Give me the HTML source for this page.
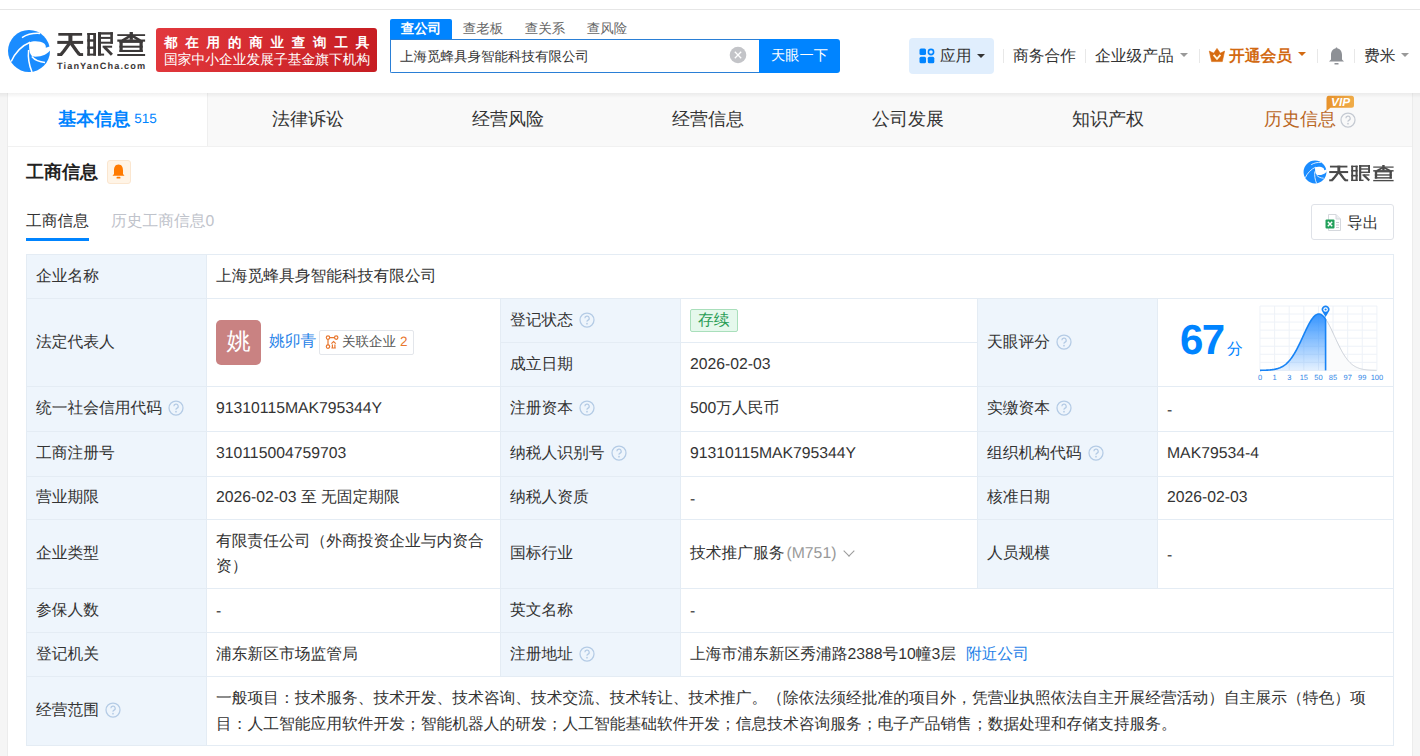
<!DOCTYPE html>
<html><head><meta charset="utf-8">
<style>
*{box-sizing:border-box;margin:0;padding:0}
html,body{width:1420px;height:756px;overflow:hidden;background:#f5f5f5}
body{font-family:"Liberation Sans",sans-serif;color:#333;position:relative;text-rendering:geometricPrecision}
.a{position:absolute;white-space:nowrap}
.hdr{position:absolute;left:0;top:0;width:1420px;height:93px;background:#fff}
.sh{position:absolute;left:0;top:93px;width:1420px;height:5px;z-index:5;background:linear-gradient(rgba(0,0,0,.055),rgba(0,0,0,0))}
.card{position:absolute;left:7px;top:93px;width:1406px;height:700px;background:#fff;border-left:1px solid #ececec;border-right:1px solid #ececec}
.tabs{position:absolute;left:8px;top:93px;width:1404px;height:54px;background:#f9f9f9;border-bottom:1px solid #f1f1f1;display:flex}
.tab{width:200px;flex:none;position:relative;font-size:18px;line-height:20px;color:#333;display:flex;align-items:center;justify-content:center;padding-bottom:2px}
.tab.on{background:#fff;border-right:1px solid #efefef;color:#0084ff;font-weight:bold}
.sep{position:absolute;width:1px;background:#e8e8e8}
.nav{font-size:15.75px;line-height:20px;color:#333;margin-top:1.5px}
.caret{position:absolute;width:0;height:0;border-left:4px solid transparent;border-right:4px solid transparent;border-top:4px solid #999}
.q{position:absolute;width:15px;height:15px;border:1px solid #b8cde4;border-radius:50%;font-size:11px;line-height:13px;text-align:center;color:#b8cde4;font-family:"Liberation Sans",sans-serif}
/* table */
.c{position:absolute;background:#fff;border-right:1px solid #e4ecf4;border-bottom:1px solid #e4ecf4;font-size:15.75px;line-height:20px;color:#333;display:flex;align-items:center;padding-left:9px;white-space:nowrap}
.l{background:#eef5fc}
.qs{margin-left:6px;position:relative;top:-1px;flex:none}
.qi{display:inline-block;width:15px;height:15px;border:1px solid #b9cfe6;border-radius:50%;font-size:10.5px;line-height:13px;text-align:center;color:#b9cfe6;margin-left:6px;position:relative;top:0px}
.tagok{display:inline-block;height:23px;padding:0 7px;line-height:21px;border:1px solid #a9dfbb;background:#e5f8ec;color:#2a9d55;border-radius:2px;margin-left:0}
.wrap2{line-height:24.7px;white-space:normal;position:relative;top:1px}
.wrapS{line-height:25.7px;white-space:nowrap;position:relative;top:1px}
.chev{display:inline-block;width:8px;height:8px;border-right:1.3px solid #9a9a9a;border-bottom:1.3px solid #9a9a9a;transform:rotate(45deg);margin-left:9px;position:relative;top:-3px}
</style></head><body>
<div class="hdr"></div>
<div class="a" style="left:0;top:9px;width:1420px;height:1px;background:#e6e6e6"></div>
<div class="sh"></div>
<div class="card"></div>

<!-- LOGO -->
<svg class="a" style="left:5px;top:27px" width="48" height="48" viewBox="0 0 48 48"><circle cx="24" cy="24" r="21" fill="#1a8cff"/>
<path d="M24.1 15.5 C28 13.6 35.5 13.8 39.2 16.6 C40.6 17.8 41 19.5 40.8 20.8 L46 19 L45.6 22.4 C43.6 26.8 36.2 30.2 28.2 29.6 C25.2 28.2 23.9 25.2 24.1 15.5 Z" fill="#fff"/>
<path d="M6.2 34.5 C10 26 17 18.5 25.2 15.2" stroke="#fff" stroke-width="1.5" fill="none"/>
<path d="M23.6 23 C22.8 31 24 38 27 45" stroke="#fff" stroke-width="1.5" fill="none"/>
<path d="M26.8 29.6 C30 33.4 35 35.2 40 35.4" stroke="#fff" stroke-width="1.5" fill="none"/>
<path d="M17 10.6 C22 7.4 29 6 35 6.4" stroke="#fff" stroke-width="1.5" fill="none"/></svg>
<svg class="a" style="left:56.7px;top:32px" width="90" height="26" viewBox="0 0 90 26"><rect x="1.30" y="1.00" width="23.80" height="2.70" fill="#3c3939"/><rect x="11.40" y="1.00" width="4.00" height="10.00" fill="#3c3939"/><rect x="0.30" y="8.90" width="25.80" height="3.00" fill="#3c3939"/><path d="M12.60 11.20 L6.70 19.30 L4.10 22.40" stroke="#3c3939" stroke-width="3.3" fill="none" stroke-linejoin="round"/><rect x="0.30" y="21.10" width="4.80" height="2.90" fill="#3c3939"/><path d="M14.10 11.20 L19.80 19.30 L22.30 22.40" stroke="#3c3939" stroke-width="3.3" fill="none" stroke-linejoin="round"/><rect x="21.50" y="21.10" width="4.60" height="2.90" fill="#3c3939"/><rect x="30.30" y="1.00" width="2.60" height="22.60" fill="#3c3939"/><rect x="36.20" y="1.00" width="2.80" height="22.60" fill="#3c3939"/><rect x="30.30" y="1.00" width="8.70" height="2.00" fill="#3c3939"/><rect x="30.30" y="7.30" width="8.70" height="2.40" fill="#3c3939"/><rect x="30.30" y="14.50" width="8.70" height="2.40" fill="#3c3939"/><rect x="30.30" y="21.60" width="8.70" height="2.00" fill="#3c3939"/><rect x="41.00" y="0.20" width="3.00" height="23.40" fill="#3c3939"/><rect x="41.00" y="0.20" width="14.90" height="2.40" fill="#3c3939"/><rect x="53.30" y="0.20" width="2.60" height="11.50" fill="#3c3939"/><rect x="43.30" y="4.90" width="10.50" height="2.00" fill="#3c3939"/><rect x="43.30" y="9.70" width="12.60" height="2.00" fill="#3c3939"/><rect x="45.60" y="13.70" width="9.50" height="2.00" fill="#3c3939"/><path d="M47.10 14.80 L54.90 22.80" stroke="#3c3939" stroke-width="2.9" fill="none" stroke-linejoin="round"/><rect x="41.00" y="21.60" width="6.10" height="2.00" fill="#3c3939"/><rect x="60.30" y="2.20" width="27.80" height="1.80" fill="#3c3939"/><rect x="72.60" y="0.00" width="3.30" height="7.80" fill="#3c3939"/><path d="M73.70 3.60 L65.30 8.60" stroke="#3c3939" stroke-width="2.5" fill="none" stroke-linejoin="round"/><path d="M74.90 3.60 L83.30 8.60" stroke="#3c3939" stroke-width="2.5" fill="none" stroke-linejoin="round"/><rect x="60.30" y="7.50" width="27.80" height="2.20" fill="#3c3939"/><rect x="62.50" y="8.90" width="3.20" height="11.10" fill="#3c3939"/><rect x="82.50" y="8.90" width="3.20" height="11.10" fill="#3c3939"/><rect x="62.50" y="9.00" width="23.20" height="1.90" fill="#3c3939"/><rect x="62.50" y="13.70" width="23.20" height="2.00" fill="#3c3939"/><rect x="62.50" y="17.90" width="23.20" height="2.10" fill="#3c3939"/><rect x="60.30" y="22.00" width="27.80" height="2.00" fill="#3c3939"/></svg>
<div class="a" style="left:57px;top:60px;font-size:9.2px;line-height:12px;font-weight:bold;color:#3c3939;letter-spacing:1.1px">TianYanCha.com</div>
<!-- red badge -->
<div class="a" style="left:156px;top:28px;width:221px;height:44px;border-radius:3px;background:linear-gradient(100deg,#e2383d,#c61d22)"></div>
<div class="a" style="left:164px;top:34.5px;font-size:13.5px;line-height:16px;color:#fff;letter-spacing:7.8px;font-weight:bold">都在用的商业查询工具</div>
<div class="a" style="left:164px;top:52px;font-size:13.75px;line-height:16px;color:#fff;letter-spacing:0px">国家中小企业发展子基金旗下机构</div>

<!-- search tabs -->
<div class="a" style="left:390px;top:19px;width:62px;height:21px;background:#0084ff;border-radius:2px 2px 0 0"></div>
<div class="a" style="left:390px;top:19px;width:62px;height:20px;font-size:13.5px;line-height:20px;text-align:center;color:#fff;font-weight:bold">查公司</div>
<div class="a" style="left:452px;top:19px;width:62px;height:20px;font-size:13.5px;line-height:20px;text-align:center;color:#666">查老板</div>
<div class="a" style="left:514px;top:19px;width:62px;height:20px;font-size:13.5px;line-height:20px;text-align:center;color:#666">查关系</div>
<div class="a" style="left:576px;top:19px;width:62px;height:20px;font-size:13.5px;line-height:20px;text-align:center;color:#666">查风险</div>
<!-- search input -->
<div class="a" style="left:390px;top:39px;width:371px;height:34px;border:1px solid #2a7fd6;border-right:none;background:#fff;border-radius:0 0 0 2px"></div>
<div class="a" style="left:400px;top:46.5px;font-size:13.5px;line-height:20px;color:#333">上海觅蜂具身智能科技有限公司</div>
<svg class="a" style="left:729px;top:46px" width="18" height="18" viewBox="0 0 18 18"><circle cx="9" cy="9" r="8.3" fill="#c3c4c8"/><path d="M5.8 5.8 L12.2 12.2 M12.2 5.8 L5.8 12.2" stroke="#fff" stroke-width="1.3"/></svg>
<div class="a" style="left:759px;top:39px;width:81px;height:34px;background:#0084ff;border-radius:0 3px 3px 0;font-size:14.25px;line-height:34px;text-align:center;color:#fff">天眼一下</div>

<!-- right nav -->
<div class="a" style="left:909px;top:38px;width:85px;height:36px;background:#e0eefd;border-radius:4px"></div>
<svg class="a" style="left:919px;top:48px" width="16" height="16" viewBox="0 0 16 16">
 <rect x="0.5" y="0.5" width="6.5" height="6.5" rx="1.5" fill="#0084ff"/>
 <circle cx="12" cy="4" r="2.6" fill="none" stroke="#0084ff" stroke-width="1.6"/>
 <rect x="0.5" y="8.8" width="6.5" height="6.5" rx="1.5" fill="#0084ff"/>
 <rect x="8.8" y="8.8" width="6.5" height="6.5" rx="1.5" fill="#0084ff"/>
</svg>
<div class="a nav" style="left:940px;top:45px">应用</div>
<div class="caret" style="left:977px;top:54px;border-top-color:#333"></div>
<div class="sep" style="left:1003px;top:49px;height:14px"></div>
<div class="a nav" style="left:1013px;top:45px">商务合作</div>
<div class="sep" style="left:1085px;top:49px;height:14px"></div>
<div class="a nav" style="left:1095px;top:45px">企业级产品</div>
<div class="caret" style="left:1180px;top:53px"></div>
<div class="sep" style="left:1199px;top:49px;height:14px"></div>
<svg class="a" style="left:1208px;top:48px" width="17" height="15" viewBox="0 0 17 15"><path d="M1.3 3.1 L5.7 5.2 L9 0.4 L12.3 5.2 L16.6 3.1 L14.3 13.6 L3.6 13.6 Z" fill="#d66a0e" stroke="#d66a0e" stroke-width="0.6" stroke-linejoin="round"/><path d="M5.6 6.8 L9 10.8 L12.4 6.8" stroke="#fff4dc" stroke-width="1.9" fill="none"/></svg>
<div class="a nav" style="left:1229px;top:45px;color:#d26a12;font-weight:bold">开通会员</div>
<div class="caret" style="left:1298px;top:52px;border-top-color:#d26a12"></div>
<div class="sep" style="left:1317px;top:49px;height:14px"></div>
<svg class="a" style="left:1328px;top:47px" width="17" height="18" viewBox="0 0 17 18"><path d="M8.5 0.5 C9.3 0.5 9.5 1.2 9.5 1.6 C12.6 2.2 14 5 14 8 L14 12.5 L16 14.5 L1 14.5 L3 12.5 L3 8 C3 5 4.4 2.2 7.5 1.6 C7.5 1.2 7.7 0.5 8.5 0.5 Z" fill="#8d9095"/><rect x="6.5" y="16" width="4" height="1.5" fill="#8d9095"/></svg>
<div class="sep" style="left:1354px;top:49px;height:14px"></div>
<div class="a nav" style="left:1364px;top:45px">费米</div>
<div class="caret" style="left:1401px;top:53px"></div>

<!-- TABS -->
<div class="tabs">
 <div class="tab on">基本信息<span style="font-weight:normal;font-size:13.5px;margin-left:4px;position:relative;top:0px">515</span></div>
 <div class="tab">法律诉讼</div>
 <div class="tab">经营风险</div>
 <div class="tab">经营信息</div>
 <div class="tab">公司发展</div>
 <div class="tab">知识产权</div>
 <div class="tab" style="color:#b9661f;flex:1">历史信息<svg width="16" height="16" viewBox="0 0 16 16" style="margin-left:4px;position:relative;top:1px"><circle cx="8" cy="8" r="7" fill="none" stroke="#c5cad2" stroke-width="1.25"/><path d="M5.9 6.3 A2.15 2.15 0 1 1 8.7 8.3 C8.1 8.6 8 9 8 9.7" fill="none" stroke="#c5cad2" stroke-width="1.25"/><circle cx="8" cy="11.7" r="0.85" fill="#c5cad2"/></svg></div>
</div>

<!-- section header -->
<div class="a" style="left:26px;top:162px;font-size:18px;line-height:20px;font-weight:bold;color:#222">工商信息</div>
<div class="a" style="left:107px;top:160px;width:24px;height:24px;background:#fff4e6;border:1px solid #fbe6cf;border-radius:3px"></div>
<svg class="a" style="left:112px;top:164px" width="13" height="15" viewBox="0 0 13 15"><path d="M6.5 0.5 C10 0.5 11 3.5 11 6.5 L11 10 L12.5 11.8 L0.5 11.8 L2 10 L2 6.5 C2 3.5 3 0.5 6.5 0.5 Z" fill="#ff7a00"/><rect x="4.5" y="12.8" width="4" height="1.8" rx="0.9" fill="#ff7a00"/></svg>

<div class="a" style="left:26px;top:212px;font-size:15.75px;line-height:20px;color:#333">工商信息</div>
<div class="a" style="left:26px;top:238px;width:63px;height:3px;background:#0084ff"></div>
<div class="a" style="left:111px;top:212px;font-size:15.75px;line-height:20px;color:#bfc3cb">历史工商信息0</div>

<div class="a" style="left:1311px;top:204px;width:83px;height:36px;border:1px solid #dfe2e8;border-radius:3px;background:#fff"></div>
<div class="a" style="left:1347px;top:214px;font-size:15.75px;line-height:20px;color:#333">导出</div>

<!-- TABLE -->
<div class="a" style="left:26px;top:254px;width:1368px;height:492px;border-left:1px solid #e4ecf4;border-top:1px solid #e4ecf4"></div>
<div class="c l" style="left:27px;top:255px;width:180px;height:44px;">企业名称</div>
<div class="c" style="left:207px;top:255px;width:1187px;height:44px;">上海觅蜂具身智能科技有限公司</div>
<div class="c l" style="left:27px;top:299px;width:180px;height:88px;">法定代表人</div>
<div class="c" style="left:207px;top:299px;width:294px;height:88px;"></div>
<div class="c l" style="left:501px;top:299px;width:180px;height:44px;">登记状态<svg class="qs" width="16" height="16" viewBox="0 0 16 16"><circle cx="8" cy="8" r="7" fill="none" stroke="#b4cbe5" stroke-width="1.25"/><path d="M5.9 6.3 A2.15 2.15 0 1 1 8.7 8.3 C8.1 8.6 8 9 8 9.7" fill="none" stroke="#b4cbe5" stroke-width="1.25"/><circle cx="8" cy="11.7" r="0.85" fill="#b4cbe5"/></svg></div>
<div class="c" style="left:681px;top:299px;width:297px;height:44px;"><span class="tagok">存续</span></div>
<div class="c l" style="left:501px;top:343px;width:180px;height:44px;">成立日期</div>
<div class="c" style="left:681px;top:343px;width:297px;height:44px;">2026-02-03</div>
<div class="c l" style="left:978px;top:299px;width:180px;height:88px;">天眼评分<svg class="qs" width="16" height="16" viewBox="0 0 16 16"><circle cx="8" cy="8" r="7" fill="none" stroke="#b4cbe5" stroke-width="1.25"/><path d="M5.9 6.3 A2.15 2.15 0 1 1 8.7 8.3 C8.1 8.6 8 9 8 9.7" fill="none" stroke="#b4cbe5" stroke-width="1.25"/><circle cx="8" cy="11.7" r="0.85" fill="#b4cbe5"/></svg></div>
<div class="c" style="left:1158px;top:299px;width:236px;height:88px;"></div>
<div class="c l" style="left:27px;top:387px;width:180px;height:45px;">统一社会信用代码<svg class="qs" width="16" height="16" viewBox="0 0 16 16"><circle cx="8" cy="8" r="7" fill="none" stroke="#b4cbe5" stroke-width="1.25"/><path d="M5.9 6.3 A2.15 2.15 0 1 1 8.7 8.3 C8.1 8.6 8 9 8 9.7" fill="none" stroke="#b4cbe5" stroke-width="1.25"/><circle cx="8" cy="11.7" r="0.85" fill="#b4cbe5"/></svg></div>
<div class="c" style="left:207px;top:387px;width:294px;height:45px;">91310115MAK795344Y</div>
<div class="c l" style="left:501px;top:387px;width:180px;height:45px;">注册资本<svg class="qs" width="16" height="16" viewBox="0 0 16 16"><circle cx="8" cy="8" r="7" fill="none" stroke="#b4cbe5" stroke-width="1.25"/><path d="M5.9 6.3 A2.15 2.15 0 1 1 8.7 8.3 C8.1 8.6 8 9 8 9.7" fill="none" stroke="#b4cbe5" stroke-width="1.25"/><circle cx="8" cy="11.7" r="0.85" fill="#b4cbe5"/></svg></div>
<div class="c" style="left:681px;top:387px;width:297px;height:45px;">500万人民币</div>
<div class="c l" style="left:978px;top:387px;width:180px;height:45px;">实缴资本<svg class="qs" width="16" height="16" viewBox="0 0 16 16"><circle cx="8" cy="8" r="7" fill="none" stroke="#b4cbe5" stroke-width="1.25"/><path d="M5.9 6.3 A2.15 2.15 0 1 1 8.7 8.3 C8.1 8.6 8 9 8 9.7" fill="none" stroke="#b4cbe5" stroke-width="1.25"/><circle cx="8" cy="11.7" r="0.85" fill="#b4cbe5"/></svg></div>
<div class="c" style="left:1158px;top:387px;width:236px;height:45px;"><span style="position:relative;top:1.5px">-</span></div>
<div class="c l" style="left:27px;top:432px;width:180px;height:45px;">工商注册号</div>
<div class="c" style="left:207px;top:432px;width:294px;height:45px;">310115004759703</div>
<div class="c l" style="left:501px;top:432px;width:180px;height:45px;">纳税人识别号<svg class="qs" width="16" height="16" viewBox="0 0 16 16"><circle cx="8" cy="8" r="7" fill="none" stroke="#b4cbe5" stroke-width="1.25"/><path d="M5.9 6.3 A2.15 2.15 0 1 1 8.7 8.3 C8.1 8.6 8 9 8 9.7" fill="none" stroke="#b4cbe5" stroke-width="1.25"/><circle cx="8" cy="11.7" r="0.85" fill="#b4cbe5"/></svg></div>
<div class="c" style="left:681px;top:432px;width:297px;height:45px;">91310115MAK795344Y</div>
<div class="c l" style="left:978px;top:432px;width:180px;height:45px;">组织机构代码<svg class="qs" width="16" height="16" viewBox="0 0 16 16"><circle cx="8" cy="8" r="7" fill="none" stroke="#b4cbe5" stroke-width="1.25"/><path d="M5.9 6.3 A2.15 2.15 0 1 1 8.7 8.3 C8.1 8.6 8 9 8 9.7" fill="none" stroke="#b4cbe5" stroke-width="1.25"/><circle cx="8" cy="11.7" r="0.85" fill="#b4cbe5"/></svg></div>
<div class="c" style="left:1158px;top:432px;width:236px;height:45px;">MAK79534-4</div>
<div class="c l" style="left:27px;top:477px;width:180px;height:43px;">营业期限</div>
<div class="c" style="left:207px;top:477px;width:294px;height:43px;">2026-02-03 至 无固定期限</div>
<div class="c l" style="left:501px;top:477px;width:180px;height:43px;">纳税人资质</div>
<div class="c" style="left:681px;top:477px;width:297px;height:43px;"><span style="position:relative;top:1.5px">-</span></div>
<div class="c l" style="left:978px;top:477px;width:180px;height:43px;">核准日期</div>
<div class="c" style="left:1158px;top:477px;width:236px;height:43px;">2026-02-03</div>
<div class="c l" style="left:27px;top:520px;width:180px;height:69px;">企业类型</div>
<div class="c" style="left:207px;top:520px;width:294px;height:69px;"><div class="wrap2">有限责任公司（外商投资企业与内资合<br>资）</div></div>
<div class="c l" style="left:501px;top:520px;width:180px;height:69px;">国标行业</div>
<div class="c" style="left:681px;top:520px;width:297px;height:69px;">技术推广服务<span style="color:#999;margin-left:2px">(M751)</span><span class="chev"></span></div>
<div class="c l" style="left:978px;top:520px;width:180px;height:69px;">人员规模</div>
<div class="c" style="left:1158px;top:520px;width:236px;height:69px;"><span style="position:relative;top:1.5px">-</span></div>
<div class="c l" style="left:27px;top:589px;width:180px;height:44px;">参保人数</div>
<div class="c" style="left:207px;top:589px;width:294px;height:44px;"><span style="position:relative;top:1.5px">-</span></div>
<div class="c l" style="left:501px;top:589px;width:180px;height:44px;">英文名称</div>
<div class="c" style="left:681px;top:589px;width:713px;height:44px;"><span style="position:relative;top:1.5px">-</span></div>
<div class="c l" style="left:27px;top:633px;width:180px;height:44px;">登记机关</div>
<div class="c" style="left:207px;top:633px;width:294px;height:44px;">浦东新区市场监管局</div>
<div class="c l" style="left:501px;top:633px;width:180px;height:44px;">注册地址<svg class="qs" width="16" height="16" viewBox="0 0 16 16"><circle cx="8" cy="8" r="7" fill="none" stroke="#b4cbe5" stroke-width="1.25"/><path d="M5.9 6.3 A2.15 2.15 0 1 1 8.7 8.3 C8.1 8.6 8 9 8 9.7" fill="none" stroke="#b4cbe5" stroke-width="1.25"/><circle cx="8" cy="11.7" r="0.85" fill="#b4cbe5"/></svg></div>
<div class="c" style="left:681px;top:633px;width:713px;height:44px;">上海市浦东新区秀浦路2388号10幢3层<span style="color:#1f82e8;margin-left:10px">附近公司</span></div>
<div class="c l" style="left:27px;top:677px;width:180px;height:69px;">经营范围<svg class="qs" width="16" height="16" viewBox="0 0 16 16"><circle cx="8" cy="8" r="7" fill="none" stroke="#b4cbe5" stroke-width="1.25"/><path d="M5.9 6.3 A2.15 2.15 0 1 1 8.7 8.3 C8.1 8.6 8 9 8 9.7" fill="none" stroke="#b4cbe5" stroke-width="1.25"/><circle cx="8" cy="11.7" r="0.85" fill="#b4cbe5"/></svg></div>
<div class="c" style="left:207px;top:677px;width:1187px;height:69px;"><div class="wrapS">一般项目：技术服务、技术开发、技术咨询、技术交流、技术转让、技术推广。（除依法须经批准的项目外，凭营业执照依法自主开展经营活动）自主展示（特色）项<br>目：人工智能应用软件开发；智能机器人的研发；人工智能基础软件开发；信息技术咨询服务；电子产品销售；数据处理和存储支持服务。</div></div>

<!-- rep -->
<div class="a" style="left:216px;top:320px;width:45px;height:45px;background:#c98282;border-radius:5px;color:#fff;font-size:24px;line-height:44px;text-align:center">姚</div>
<div class="a" style="left:269px;top:332px;font-size:15.75px;line-height:20px;color:#1f82e8">姚卯青</div>
<div class="a" style="left:319px;top:330px;width:95px;height:25px;border:1px solid #e3e6eb;border-radius:2px;background:#fff"></div>
<svg class="a" style="left:325px;top:335px" width="14" height="15" viewBox="0 0 14 15"><g fill="none" stroke="#e8772e" stroke-width="1.2"><circle cx="3" cy="2.6" r="1.7"/><circle cx="11.2" cy="2.6" r="1.7"/><circle cx="3" cy="11.6" r="1.7"/><path d="M4.7 2.6 H9.5 M3 4.3 V9.9"/><path d="M6.4 8.6 L8.6 6.6 L10.8 8.6 M7.4 9.6 V13 M9.9 9.6 V13 M6.4 13 H10.8"/></g></svg>
<div class="a" style="left:342px;top:333px;font-size:13.5px;line-height:18px;color:#555">关联企业</div>
<div class="a" style="left:400px;top:333px;font-size:13.5px;line-height:18px;color:#e8772e">2</div>
<!-- score -->
<div class="a" style="left:1180px;top:316px;font-size:42px;line-height:48px;font-weight:bold;color:#0084ff;letter-spacing:-1.5px">67</div>
<div class="a" style="left:1227px;top:340px;font-size:15.75px;line-height:20px;color:#0084ff">分</div>
<svg class="a" style="left:1255.8px;top:302.2px;overflow:visible" width="124.9" height="80.4" viewBox="-4 -4 124.9 80.4">
<defs><linearGradient id="gf" x1="0" y1="0" x2="0" y2="1"><stop offset="0" stop-color="#2b8fff" stop-opacity="0.95"/><stop offset="1" stop-color="#2b8fff" stop-opacity="0.12"/></linearGradient></defs>
<line x1="0.00" y1="0" x2="0.00" y2="64.4" stroke="#eef2f8" stroke-width="1"/><line x1="14.61" y1="0" x2="14.61" y2="64.4" stroke="#eef2f8" stroke-width="1"/><line x1="29.23" y1="0" x2="29.23" y2="64.4" stroke="#eef2f8" stroke-width="1"/><line x1="43.84" y1="0" x2="43.84" y2="64.4" stroke="#eef2f8" stroke-width="1"/><line x1="58.45" y1="0" x2="58.45" y2="64.4" stroke="#eef2f8" stroke-width="1"/><line x1="73.06" y1="0" x2="73.06" y2="64.4" stroke="#eef2f8" stroke-width="1"/><line x1="87.68" y1="0" x2="87.68" y2="64.4" stroke="#eef2f8" stroke-width="1"/><line x1="102.29" y1="0" x2="102.29" y2="64.4" stroke="#eef2f8" stroke-width="1"/><line x1="116.90" y1="0" x2="116.90" y2="64.4" stroke="#eef2f8" stroke-width="1"/><line x1="0" y1="0.00" x2="116.9" y2="0.00" stroke="#eef2f8" stroke-width="1"/><line x1="0" y1="8.05" x2="116.9" y2="8.05" stroke="#eef2f8" stroke-width="1"/><line x1="0" y1="16.10" x2="116.9" y2="16.10" stroke="#eef2f8" stroke-width="1"/><line x1="0" y1="24.15" x2="116.9" y2="24.15" stroke="#eef2f8" stroke-width="1"/><line x1="0" y1="32.20" x2="116.9" y2="32.20" stroke="#eef2f8" stroke-width="1"/><line x1="0" y1="40.25" x2="116.9" y2="40.25" stroke="#eef2f8" stroke-width="1"/><line x1="0" y1="48.30" x2="116.9" y2="48.30" stroke="#eef2f8" stroke-width="1"/><line x1="0" y1="56.35" x2="116.9" y2="56.35" stroke="#eef2f8" stroke-width="1"/><line x1="0" y1="64.40" x2="116.9" y2="64.40" stroke="#eef2f8" stroke-width="1"/>
<polygon points="65.60,13.05 66.10,13.78 66.60,14.55 67.10,15.36 67.60,16.20 68.10,17.08 68.60,17.98 69.10,18.92 69.60,19.88 70.10,20.87 70.60,21.88 71.10,22.90 71.60,23.95 72.10,25.00 72.60,26.07 73.10,27.15 73.60,28.23 74.10,29.32 74.60,30.41 75.10,31.50 75.60,32.58 76.10,33.67 76.60,34.74 77.10,35.81 77.60,36.86 78.10,37.91 78.60,38.94 79.10,39.95 79.60,40.95 80.10,41.93 80.60,42.89 81.10,43.83 81.60,44.75 82.10,45.65 82.60,46.52 83.10,47.38 83.60,48.20 84.10,49.00 84.60,49.78 85.10,50.53 85.60,51.26 86.10,51.96 86.60,52.64 87.10,53.29 87.60,53.91 88.10,54.51 88.60,55.09 89.10,55.64 89.60,56.17 90.10,56.67 90.60,57.15 91.10,57.61 91.60,58.04 92.10,58.45 92.60,58.84 93.10,59.21 93.60,59.56 94.10,59.90 94.60,60.21 95.10,60.51 95.60,60.78 96.10,61.05 96.60,61.29 97.10,61.52 97.60,61.74 98.10,61.94 98.60,62.13 99.10,62.31 99.60,62.47 100.10,62.63 100.60,62.77 101.10,62.90 101.60,63.03 102.10,63.14 102.60,63.25 103.10,63.35 103.60,63.44 104.10,63.52 104.60,63.60 105.10,63.67 105.60,63.74 106.10,63.80 106.60,63.85 107.10,63.90 107.60,63.95 108.10,63.99 108.60,64.03 109.10,64.07 109.60,64.10 110.10,64.13 110.60,64.16 111.10,64.18 111.60,64.20 112.10,64.22 112.60,64.24 113.10,64.26 113.60,64.27 114.10,64.29 114.60,64.30 115.10,64.31 115.60,64.32 116.10,64.33 116.60,64.34 116.9,64.4 65.6,64.4" fill="#fafbfc"/>
<polyline points="65.60,13.05 66.10,13.78 66.60,14.55 67.10,15.36 67.60,16.20 68.10,17.08 68.60,17.98 69.10,18.92 69.60,19.88 70.10,20.87 70.60,21.88 71.10,22.90 71.60,23.95 72.10,25.00 72.60,26.07 73.10,27.15 73.60,28.23 74.10,29.32 74.60,30.41 75.10,31.50 75.60,32.58 76.10,33.67 76.60,34.74 77.10,35.81 77.60,36.86 78.10,37.91 78.60,38.94 79.10,39.95 79.60,40.95 80.10,41.93 80.60,42.89 81.10,43.83 81.60,44.75 82.10,45.65 82.60,46.52 83.10,47.38 83.60,48.20 84.10,49.00 84.60,49.78 85.10,50.53 85.60,51.26 86.10,51.96 86.60,52.64 87.10,53.29 87.60,53.91 88.10,54.51 88.60,55.09 89.10,55.64 89.60,56.17 90.10,56.67 90.60,57.15 91.10,57.61 91.60,58.04 92.10,58.45 92.60,58.84 93.10,59.21 93.60,59.56 94.10,59.90 94.60,60.21 95.10,60.51 95.60,60.78 96.10,61.05 96.60,61.29 97.10,61.52 97.60,61.74 98.10,61.94 98.60,62.13 99.10,62.31 99.60,62.47 100.10,62.63 100.60,62.77 101.10,62.90 101.60,63.03 102.10,63.14 102.60,63.25 103.10,63.35 103.60,63.44 104.10,63.52 104.60,63.60 105.10,63.67 105.60,63.74 106.10,63.80 106.60,63.85 107.10,63.90 107.60,63.95 108.10,63.99 108.60,64.03 109.10,64.07 109.60,64.10 110.10,64.13 110.60,64.16 111.10,64.18 111.60,64.20 112.10,64.22 112.60,64.24 113.10,64.26 113.60,64.27 114.10,64.29 114.60,64.30 115.10,64.31 115.60,64.32 116.10,64.33 116.60,64.34" fill="none" stroke="#c9ced6" stroke-width="1"/>
<polygon points="0.00,64.35 0.50,64.34 1.00,64.34 1.50,64.33 2.00,64.32 2.50,64.31 3.00,64.30 3.50,64.29 4.00,64.27 4.50,64.26 5.00,64.24 5.50,64.22 6.00,64.20 6.50,64.18 7.00,64.16 7.50,64.13 8.00,64.10 8.50,64.07 9.00,64.03 9.50,63.99 10.00,63.95 10.50,63.90 11.00,63.85 11.50,63.80 12.00,63.74 12.50,63.67 13.00,63.60 13.50,63.52 14.00,63.44 14.50,63.35 15.00,63.25 15.50,63.14 16.00,63.03 16.50,62.90 17.00,62.77 17.50,62.63 18.00,62.47 18.50,62.31 19.00,62.13 19.50,61.94 20.00,61.74 20.50,61.52 21.00,61.29 21.50,61.05 22.00,60.78 22.50,60.51 23.00,60.21 23.50,59.90 24.00,59.56 24.50,59.21 25.00,58.84 25.50,58.45 26.00,58.04 26.50,57.61 27.00,57.15 27.50,56.67 28.00,56.17 28.50,55.64 29.00,55.09 29.50,54.51 30.00,53.91 30.50,53.29 31.00,52.64 31.50,51.96 32.00,51.26 32.50,50.53 33.00,49.78 33.50,49.00 34.00,48.20 34.50,47.38 35.00,46.52 35.50,45.65 36.00,44.75 36.50,43.83 37.00,42.89 37.50,41.93 38.00,40.95 38.50,39.95 39.00,38.94 39.50,37.91 40.00,36.86 40.50,35.81 41.00,34.74 41.50,33.67 42.00,32.58 42.50,31.50 43.00,30.41 43.50,29.32 44.00,28.23 44.50,27.15 45.00,26.07 45.50,25.00 46.00,23.95 46.50,22.90 47.00,21.88 47.50,20.87 48.00,19.88 48.50,18.92 49.00,17.98 49.50,17.08 50.00,16.20 50.50,15.36 51.00,14.55 51.50,13.78 52.00,13.05 52.50,12.36 53.00,11.72 53.50,11.12 54.00,10.58 54.50,10.08 55.00,9.63 55.50,9.23 56.00,8.89 56.50,8.60 57.00,8.37 57.50,8.19 58.00,8.07 58.50,8.01 59.00,8.00 59.50,8.06 60.00,8.16 60.50,8.33 61.00,8.55 61.50,8.83 62.00,9.16 62.50,9.54 63.00,9.98 63.50,10.47 64.00,11.01 64.50,11.60 65.00,12.23 65.50,12.91 65.6,64.4 0,64.4" fill="url(#gf)"/>
<polyline points="0.00,64.35 0.50,64.34 1.00,64.34 1.50,64.33 2.00,64.32 2.50,64.31 3.00,64.30 3.50,64.29 4.00,64.27 4.50,64.26 5.00,64.24 5.50,64.22 6.00,64.20 6.50,64.18 7.00,64.16 7.50,64.13 8.00,64.10 8.50,64.07 9.00,64.03 9.50,63.99 10.00,63.95 10.50,63.90 11.00,63.85 11.50,63.80 12.00,63.74 12.50,63.67 13.00,63.60 13.50,63.52 14.00,63.44 14.50,63.35 15.00,63.25 15.50,63.14 16.00,63.03 16.50,62.90 17.00,62.77 17.50,62.63 18.00,62.47 18.50,62.31 19.00,62.13 19.50,61.94 20.00,61.74 20.50,61.52 21.00,61.29 21.50,61.05 22.00,60.78 22.50,60.51 23.00,60.21 23.50,59.90 24.00,59.56 24.50,59.21 25.00,58.84 25.50,58.45 26.00,58.04 26.50,57.61 27.00,57.15 27.50,56.67 28.00,56.17 28.50,55.64 29.00,55.09 29.50,54.51 30.00,53.91 30.50,53.29 31.00,52.64 31.50,51.96 32.00,51.26 32.50,50.53 33.00,49.78 33.50,49.00 34.00,48.20 34.50,47.38 35.00,46.52 35.50,45.65 36.00,44.75 36.50,43.83 37.00,42.89 37.50,41.93 38.00,40.95 38.50,39.95 39.00,38.94 39.50,37.91 40.00,36.86 40.50,35.81 41.00,34.74 41.50,33.67 42.00,32.58 42.50,31.50 43.00,30.41 43.50,29.32 44.00,28.23 44.50,27.15 45.00,26.07 45.50,25.00 46.00,23.95 46.50,22.90 47.00,21.88 47.50,20.87 48.00,19.88 48.50,18.92 49.00,17.98 49.50,17.08 50.00,16.20 50.50,15.36 51.00,14.55 51.50,13.78 52.00,13.05 52.50,12.36 53.00,11.72 53.50,11.12 54.00,10.58 54.50,10.08 55.00,9.63 55.50,9.23 56.00,8.89 56.50,8.60 57.00,8.37 57.50,8.19 58.00,8.07 58.50,8.01 59.00,8.00 59.50,8.06 60.00,8.16 60.50,8.33 61.00,8.55 61.50,8.83 62.00,9.16 62.50,9.54 63.00,9.98 63.50,10.47 64.00,11.01 64.50,11.60 65.00,12.23 65.50,12.91" fill="none" stroke="#1783f5" stroke-width="1.6"/>
<line x1="65.6" y1="13.05" x2="65.6" y2="64.4" stroke="#1783f5" stroke-width="1.6"/>
<path d="M65.6 11 L62.3 5.6 A3.9 3.9 0 1 1 68.89999999999999 5.6 Z" fill="#1783f5"/>
<circle cx="65.6" cy="3.5" r="2.3" fill="#fff"/><circle cx="65.6" cy="3.5" r="1.1" fill="#1783f5"/>
<text x="0.00" y="73.9" text-anchor="middle" font-size="7.5" fill="#2f86e6" font-family="Liberation Sans">0</text><text x="14.61" y="73.9" text-anchor="middle" font-size="7.5" fill="#2f86e6" font-family="Liberation Sans">1</text><text x="29.23" y="73.9" text-anchor="middle" font-size="7.5" fill="#2f86e6" font-family="Liberation Sans">3</text><text x="43.84" y="73.9" text-anchor="middle" font-size="7.5" fill="#2f86e6" font-family="Liberation Sans">15</text><text x="58.45" y="73.9" text-anchor="middle" font-size="7.5" fill="#2f86e6" font-family="Liberation Sans">50</text><text x="73.06" y="73.9" text-anchor="middle" font-size="7.5" fill="#2f86e6" font-family="Liberation Sans">85</text><text x="87.68" y="73.9" text-anchor="middle" font-size="7.5" fill="#2f86e6" font-family="Liberation Sans">97</text><text x="102.29" y="73.9" text-anchor="middle" font-size="7.5" fill="#2f86e6" font-family="Liberation Sans">99</text><text x="116.90" y="73.9" text-anchor="middle" font-size="7.5" fill="#2f86e6" font-family="Liberation Sans">100</text>
</svg>
<!-- small logo -->
<svg class="a" style="left:1302.6px;top:160.2px" width="24" height="24" viewBox="2 2 44 44"><circle cx="24" cy="24" r="21" fill="#1a8cff"/>
<path d="M24.1 15.5 C28 13.6 35.5 13.8 39.2 16.6 C40.6 17.8 41 19.5 40.8 20.8 L46 19 L45.6 22.4 C43.6 26.8 36.2 30.2 28.2 29.6 C25.2 28.2 23.9 25.2 24.1 15.5 Z" fill="#fff"/>
<path d="M6.2 34.5 C10 26 17 18.5 25.2 15.2" stroke="#fff" stroke-width="1.5" fill="none"/>
<path d="M23.6 23 C22.8 31 24 38 27 45" stroke="#fff" stroke-width="1.5" fill="none"/>
<path d="M26.8 29.6 C30 33.4 35 35.2 40 35.4" stroke="#fff" stroke-width="1.5" fill="none"/>
<path d="M17 10.6 C22 7.4 29 6 35 6.4" stroke="#fff" stroke-width="1.5" fill="none"/></svg>
<svg class="a" style="left:1328.7px;top:164.6px" width="66" height="18" viewBox="0 0 90 26" preserveAspectRatio="none"><g transform="scale(1,0.98)"><rect x="1.30" y="1.00" width="23.80" height="2.70" fill="#4a4a4a"/><rect x="11.40" y="1.00" width="4.00" height="10.00" fill="#4a4a4a"/><rect x="0.30" y="8.90" width="25.80" height="3.00" fill="#4a4a4a"/><path d="M12.60 11.20 L6.70 19.30 L4.10 22.40" stroke="#4a4a4a" stroke-width="3.3" fill="none" stroke-linejoin="round"/><rect x="0.30" y="21.10" width="4.80" height="2.90" fill="#4a4a4a"/><path d="M14.10 11.20 L19.80 19.30 L22.30 22.40" stroke="#4a4a4a" stroke-width="3.3" fill="none" stroke-linejoin="round"/><rect x="21.50" y="21.10" width="4.60" height="2.90" fill="#4a4a4a"/><rect x="30.30" y="1.00" width="2.60" height="22.60" fill="#4a4a4a"/><rect x="36.20" y="1.00" width="2.80" height="22.60" fill="#4a4a4a"/><rect x="30.30" y="1.00" width="8.70" height="2.00" fill="#4a4a4a"/><rect x="30.30" y="7.30" width="8.70" height="2.40" fill="#4a4a4a"/><rect x="30.30" y="14.50" width="8.70" height="2.40" fill="#4a4a4a"/><rect x="30.30" y="21.60" width="8.70" height="2.00" fill="#4a4a4a"/><rect x="41.00" y="0.20" width="3.00" height="23.40" fill="#4a4a4a"/><rect x="41.00" y="0.20" width="14.90" height="2.40" fill="#4a4a4a"/><rect x="53.30" y="0.20" width="2.60" height="11.50" fill="#4a4a4a"/><rect x="43.30" y="4.90" width="10.50" height="2.00" fill="#4a4a4a"/><rect x="43.30" y="9.70" width="12.60" height="2.00" fill="#4a4a4a"/><rect x="45.60" y="13.70" width="9.50" height="2.00" fill="#4a4a4a"/><path d="M47.10 14.80 L54.90 22.80" stroke="#4a4a4a" stroke-width="2.9" fill="none" stroke-linejoin="round"/><rect x="41.00" y="21.60" width="6.10" height="2.00" fill="#4a4a4a"/><rect x="60.30" y="2.20" width="27.80" height="1.80" fill="#4a4a4a"/><rect x="72.60" y="0.00" width="3.30" height="7.80" fill="#4a4a4a"/><path d="M73.70 3.60 L65.30 8.60" stroke="#4a4a4a" stroke-width="2.5" fill="none" stroke-linejoin="round"/><path d="M74.90 3.60 L83.30 8.60" stroke="#4a4a4a" stroke-width="2.5" fill="none" stroke-linejoin="round"/><rect x="60.30" y="7.50" width="27.80" height="2.20" fill="#4a4a4a"/><rect x="62.50" y="8.90" width="3.20" height="11.10" fill="#4a4a4a"/><rect x="82.50" y="8.90" width="3.20" height="11.10" fill="#4a4a4a"/><rect x="62.50" y="9.00" width="23.20" height="1.90" fill="#4a4a4a"/><rect x="62.50" y="13.70" width="23.20" height="2.00" fill="#4a4a4a"/><rect x="62.50" y="17.90" width="23.20" height="2.10" fill="#4a4a4a"/><rect x="60.30" y="22.00" width="27.80" height="2.00" fill="#4a4a4a"/></g></svg>
<!-- excel icon -->
<svg class="a" style="left:1325px;top:214px" width="16" height="17" viewBox="0 0 16 17"><path d="M3.5 0.5 H11 L15.5 5 V16.5 H3.5 Z" fill="#fff" stroke="#d5d8dd"/><path d="M11 0.5 V5 H15.5" fill="#eceef1" stroke="#d5d8dd"/><rect x="11" y="8" width="3" height="1" fill="#c9ccd2"/><rect x="11" y="10.5" width="3" height="1" fill="#c9ccd2"/><rect x="11" y="13" width="3" height="1" fill="#c9ccd2"/><rect x="0.5" y="5.5" width="9" height="9" rx="1" fill="#22a05a"/><path d="M2.8 7.8 L7.2 12.2 M7.2 7.8 L2.8 12.2" stroke="#fff" stroke-width="1.4"/></svg>
<!-- VIP -->
<svg class="a" style="left:1325px;top:95px" width="30" height="17" viewBox="0 0 30 17"><defs><linearGradient id="vg" x1="0" x2="1"><stop offset="0" stop-color="#e8922a"/><stop offset="1" stop-color="#f0ad4a"/></linearGradient></defs><path d="M3.5 0.8 H26.5 A2.5 2.5 0 0 1 29 3.3 V10.3 A2.5 2.5 0 0 1 26.5 12.8 H5.5 L1.5 16 V3.3 A2.5 2.5 0 0 1 3.5 0.8 Z" fill="url(#vg)"/><text x="15.6" y="11" text-anchor="middle" font-size="11.8" font-weight="bold" font-style="italic" fill="#fff" font-family="Liberation Sans">VIP</text></svg>

</body></html>
